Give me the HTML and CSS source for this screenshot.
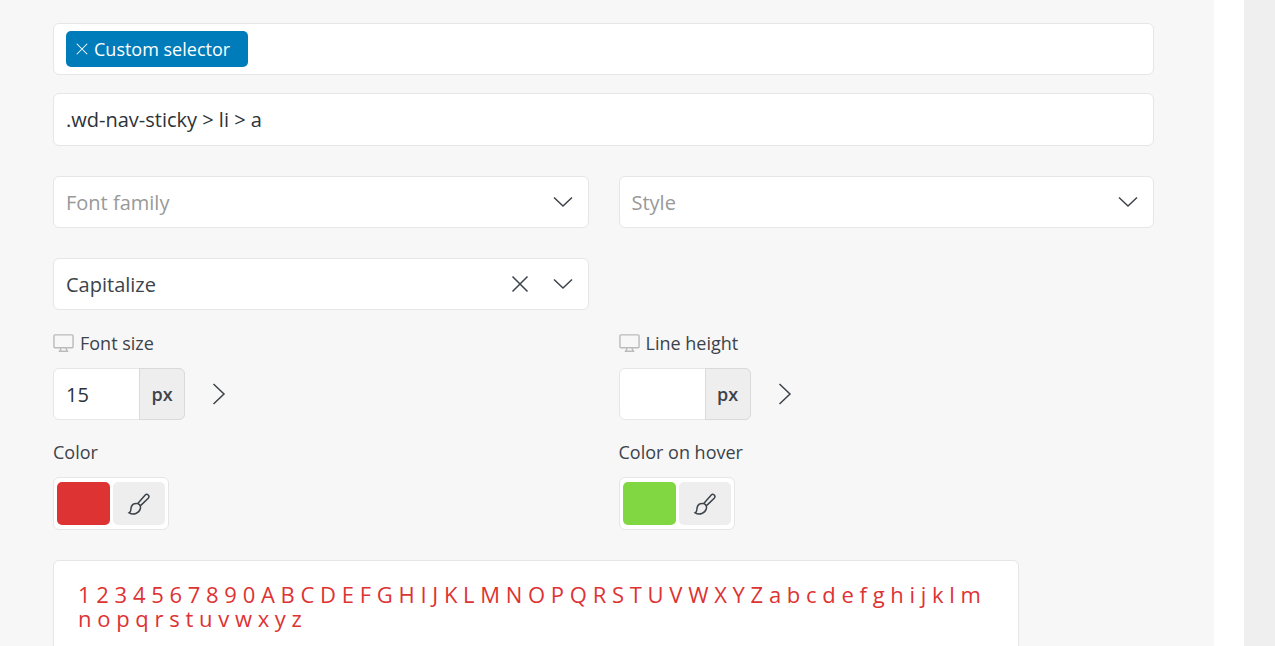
FILE: index.html
```html
<!DOCTYPE html>
<html lang="en">
<head>
  <meta charset="UTF-8">
  <title>Typography settings</title>
  <meta name="viewport" content="width=device-width, initial-scale=1.0">
  <link rel="stylesheet" href="styles.css">
</head>
<body>

  <!-- Shared icons -->
  <svg class="sprite" aria-hidden="true">
    <symbol id="icon-down" viewBox="0 0 20 20"><path d="M1 5.5L10 14L19 5.5"/></symbol>
    <symbol id="icon-right" viewBox="0 0 20 24"><path d="M4.5 2L15 12L4.5 22"/></symbol>
    <symbol id="icon-close" viewBox="0 0 20 20"><path d="M2.5 2.5L17.5 17.5M17.5 2.5L2.5 17.5"/></symbol>
    <symbol id="icon-desktop" viewBox="0 0 22 20">
      <path d="M2 1.5H20Q21 1.5 21 2.5V14Q21 15 20 15H2Q1 15 1 14V2.5Q1 1.5 2 1.5ZM8.5 15L7.5 18M13.5 15L14.5 18M6 18.7H16"/>
    </symbol>
    <symbol id="icon-brush" viewBox="0 0 24 24">
      <path d="M11 11.2L18 3.2C20.2 1 23.3 3.8 21.2 6.2L13.8 13.4M9.4 11.6C11.2 10.8 14.4 13.5 13.3 16.8C12.1 21.2 6.4 23.4 2.2 20.8C4.8 19.6 3.2 17.2 4.5 14.4C5.5 12.3 7.4 11.5 9.4 11.6ZM10.9 11.3L13.7 13.8"/>
    </symbol>
  </svg>

  <main class="content">
    <form class="panel">
      <div class="tags">
        <span class="tag">
          <button type="button" class="tag-remove" aria-label="Remove Custom selector"><svg><use href="#icon-close"/></svg></button>
          Custom selector
        </span>
        <input type="text" class="tags-input" aria-label="Selectors">
      </div>

      <input type="text" class="text-input selector-input" value=".wd-nav-sticky &gt; li &gt; a" aria-label="Custom selector">

      <div class="row">
        <div class="select">
          <select class="placeholder" aria-label="Font family"><option>Font family</option></select>
          <svg class="select-arrow"><use href="#icon-down"/></svg>
        </div>
        <div class="select">
          <select class="placeholder" aria-label="Style"><option>Style</option></select>
          <svg class="select-arrow"><use href="#icon-down"/></svg>
        </div>
        <div class="select">
          <select aria-label="Text transform"><option>Capitalize</option></select>
          <button type="button" class="select-clear" aria-label="Clear"><svg><use href="#icon-close"/></svg></button>
          <svg class="select-arrow"><use href="#icon-down"/></svg>
        </div>
      </div>

      <div class="row fields">
        <div class="field">
          <label for="font-size"><svg class="icon-desktop"><use href="#icon-desktop"/></svg>Font size</label>
          <div class="size">
            <div class="size-group">
              <input type="text" id="font-size" value="15">
              <span class="unit">px</span>
            </div>
            <button type="button" class="expand" aria-label="Show more devices"><svg><use href="#icon-right"/></svg></button>
          </div>
        </div>
        <div class="field">
          <label for="line-height"><svg class="icon-desktop"><use href="#icon-desktop"/></svg>Line height</label>
          <div class="size">
            <div class="size-group">
              <input type="text" id="line-height">
              <span class="unit">px</span>
            </div>
            <button type="button" class="expand" aria-label="Show more devices"><svg><use href="#icon-right"/></svg></button>
          </div>
        </div>
        <div class="field">
          <label for="color">Color</label>
          <div class="color">
            <input type="color" id="color" value="#dd3333">
            <button type="button" class="color-brush" aria-label="Pick color"><svg><use href="#icon-brush"/></svg></button>
          </div>
        </div>
        <div class="field">
          <label for="color-hover">Color on hover</label>
          <div class="color">
            <input type="color" id="color-hover" value="#81d742">
            <button type="button" class="color-brush" aria-label="Pick hover color"><svg><use href="#icon-brush"/></svg></button>
          </div>
        </div>
      </div>

      <div class="preview">1 2 3 4 5 6 7 8 9 0 A B C D E F G H I J K L M N O P Q R S T U V W X Y Z a b c d e f g h i j k l m n o p q r s t u v w x y z</div>
    </form>
  </main>

</body>
</html>
```

FILE: styles.css
```css
* {
  box-sizing: border-box;
  margin: 0;
  padding: 0;
}

body {
  font-family: "Segoe UI", "Open Sans", "Noto Sans", sans-serif;
  font-size: 20px;
  color: #3c434a;
  background-color: #efefef;
}

input,
select,
button {
  font: inherit;
  color: inherit;
}

button {
  background: none;
  border: none;
  cursor: pointer;
}

svg {
  display: block;
  fill: none;
  stroke: #3c434a;
  stroke-width: 1.5;
}

.sprite {
  position: absolute;
  width: 0;
  height: 0;
}

.content {
  background: #fff;
  margin-right: 31px;
  padding-right: 30px;
  min-height: 100vh;
}

.panel {
  background: #f7f7f7;
  padding: 23px 60px 30px 53px;
  min-height: 100vh;
}

.tags,
.text-input,
.select select,
.size-group,
.color,
.preview {
  background: #fff;
  border: 1px solid #e6e6e6;
  border-radius: 6px;
}

.tags {
  display: flex;
  align-items: center;
  height: 52px;
  padding: 0 12px;
}

.tag {
  display: flex;
  align-items: center;
  gap: 5px;
  height: 36px;
  padding: 0 18px 0 9px;
  border-radius: 5px;
  background: #007cba;
  color: #fff;
  font-size: 18px;
  white-space: nowrap;
}

.tag svg {
  width: 14px;
  height: 14px;
  stroke: #fff;
}

.tags-input {
  flex: 1;
  min-width: 0;
  border: none;
  outline: none;
}

.text-input {
  display: block;
  width: 100%;
  height: 53px;
  padding: 0 12px;
}

.selector-input {
  margin: 18px 0 30px;
  color: #2c3338;
}

.row {
  display: grid;
  grid-template-columns: 1fr 1fr;
  gap: 30px;
}

.select {
  position: relative;
}

.select select {
  display: block;
  width: 100%;
  height: 52px;
  padding: 0 90px 0 12px;
  appearance: none;
}

.select .placeholder {
  color: #999;
}

.select-arrow {
  position: absolute;
  top: 16px;
  right: 16px;
  width: 20px;
  height: 20px;
  pointer-events: none;
}

.select-clear {
  position: absolute;
  top: 16px;
  right: 59px;
}

.select-clear svg {
  width: 20px;
  height: 20px;
}

.fields {
  margin-top: 20px;
  row-gap: 19px;
}

.field label {
  display: flex;
  align-items: center;
  gap: 6px;
  height: 26px;
  margin-bottom: 12px;
  font-size: 18px;
}

.icon-desktop {
  width: 21px;
  height: 20px;
  stroke: #bbb;
}

.size {
  display: flex;
  align-items: center;
  gap: 24px;
}

.size-group {
  display: flex;
  width: 132px;
  height: 52px;
}

.size-group input {
  flex: 1;
  min-width: 0;
  padding-left: 12px;
  border: none;
  background: none;
  color: #2c3338;
}

.unit {
  display: flex;
  align-items: center;
  justify-content: center;
  width: 46px;
  margin: -1px;
  border: 1px solid #dadada;
  border-radius: 0 6px 6px 0;
  background: #eee;
  font-size: 18px;
  font-weight: 600;
}

.expand svg {
  width: 20px;
  height: 24px;
}

.color {
  display: flex;
  gap: 3px;
  width: fit-content;
  height: 53px;
  padding: 4px 3px;
}

.color input,
.color-brush {
  height: 43px;
  border: none;
  border-radius: 5px;
}

.color input {
  width: 53px;
  overflow: hidden;
  appearance: none;
  cursor: pointer;
}

.color input::-webkit-color-swatch-wrapper {
  padding: 0;
}

.color input::-webkit-color-swatch {
  border: none;
}

.color-brush {
  display: flex;
  align-items: center;
  justify-content: center;
  width: 52px;
  background: #eee;
}

.color-brush svg {
  width: 24px;
  height: 24px;
}

.preview {
  max-width: 966px;
  min-height: 120px;
  margin-top: 30px;
  padding: 21px 24px;
  color: #dd3333;
  font-size: 22px;
  line-height: 24px;
}

@media (max-width: 600px) {
  .row {
    grid-template-columns: 1fr;
  }
}
```
